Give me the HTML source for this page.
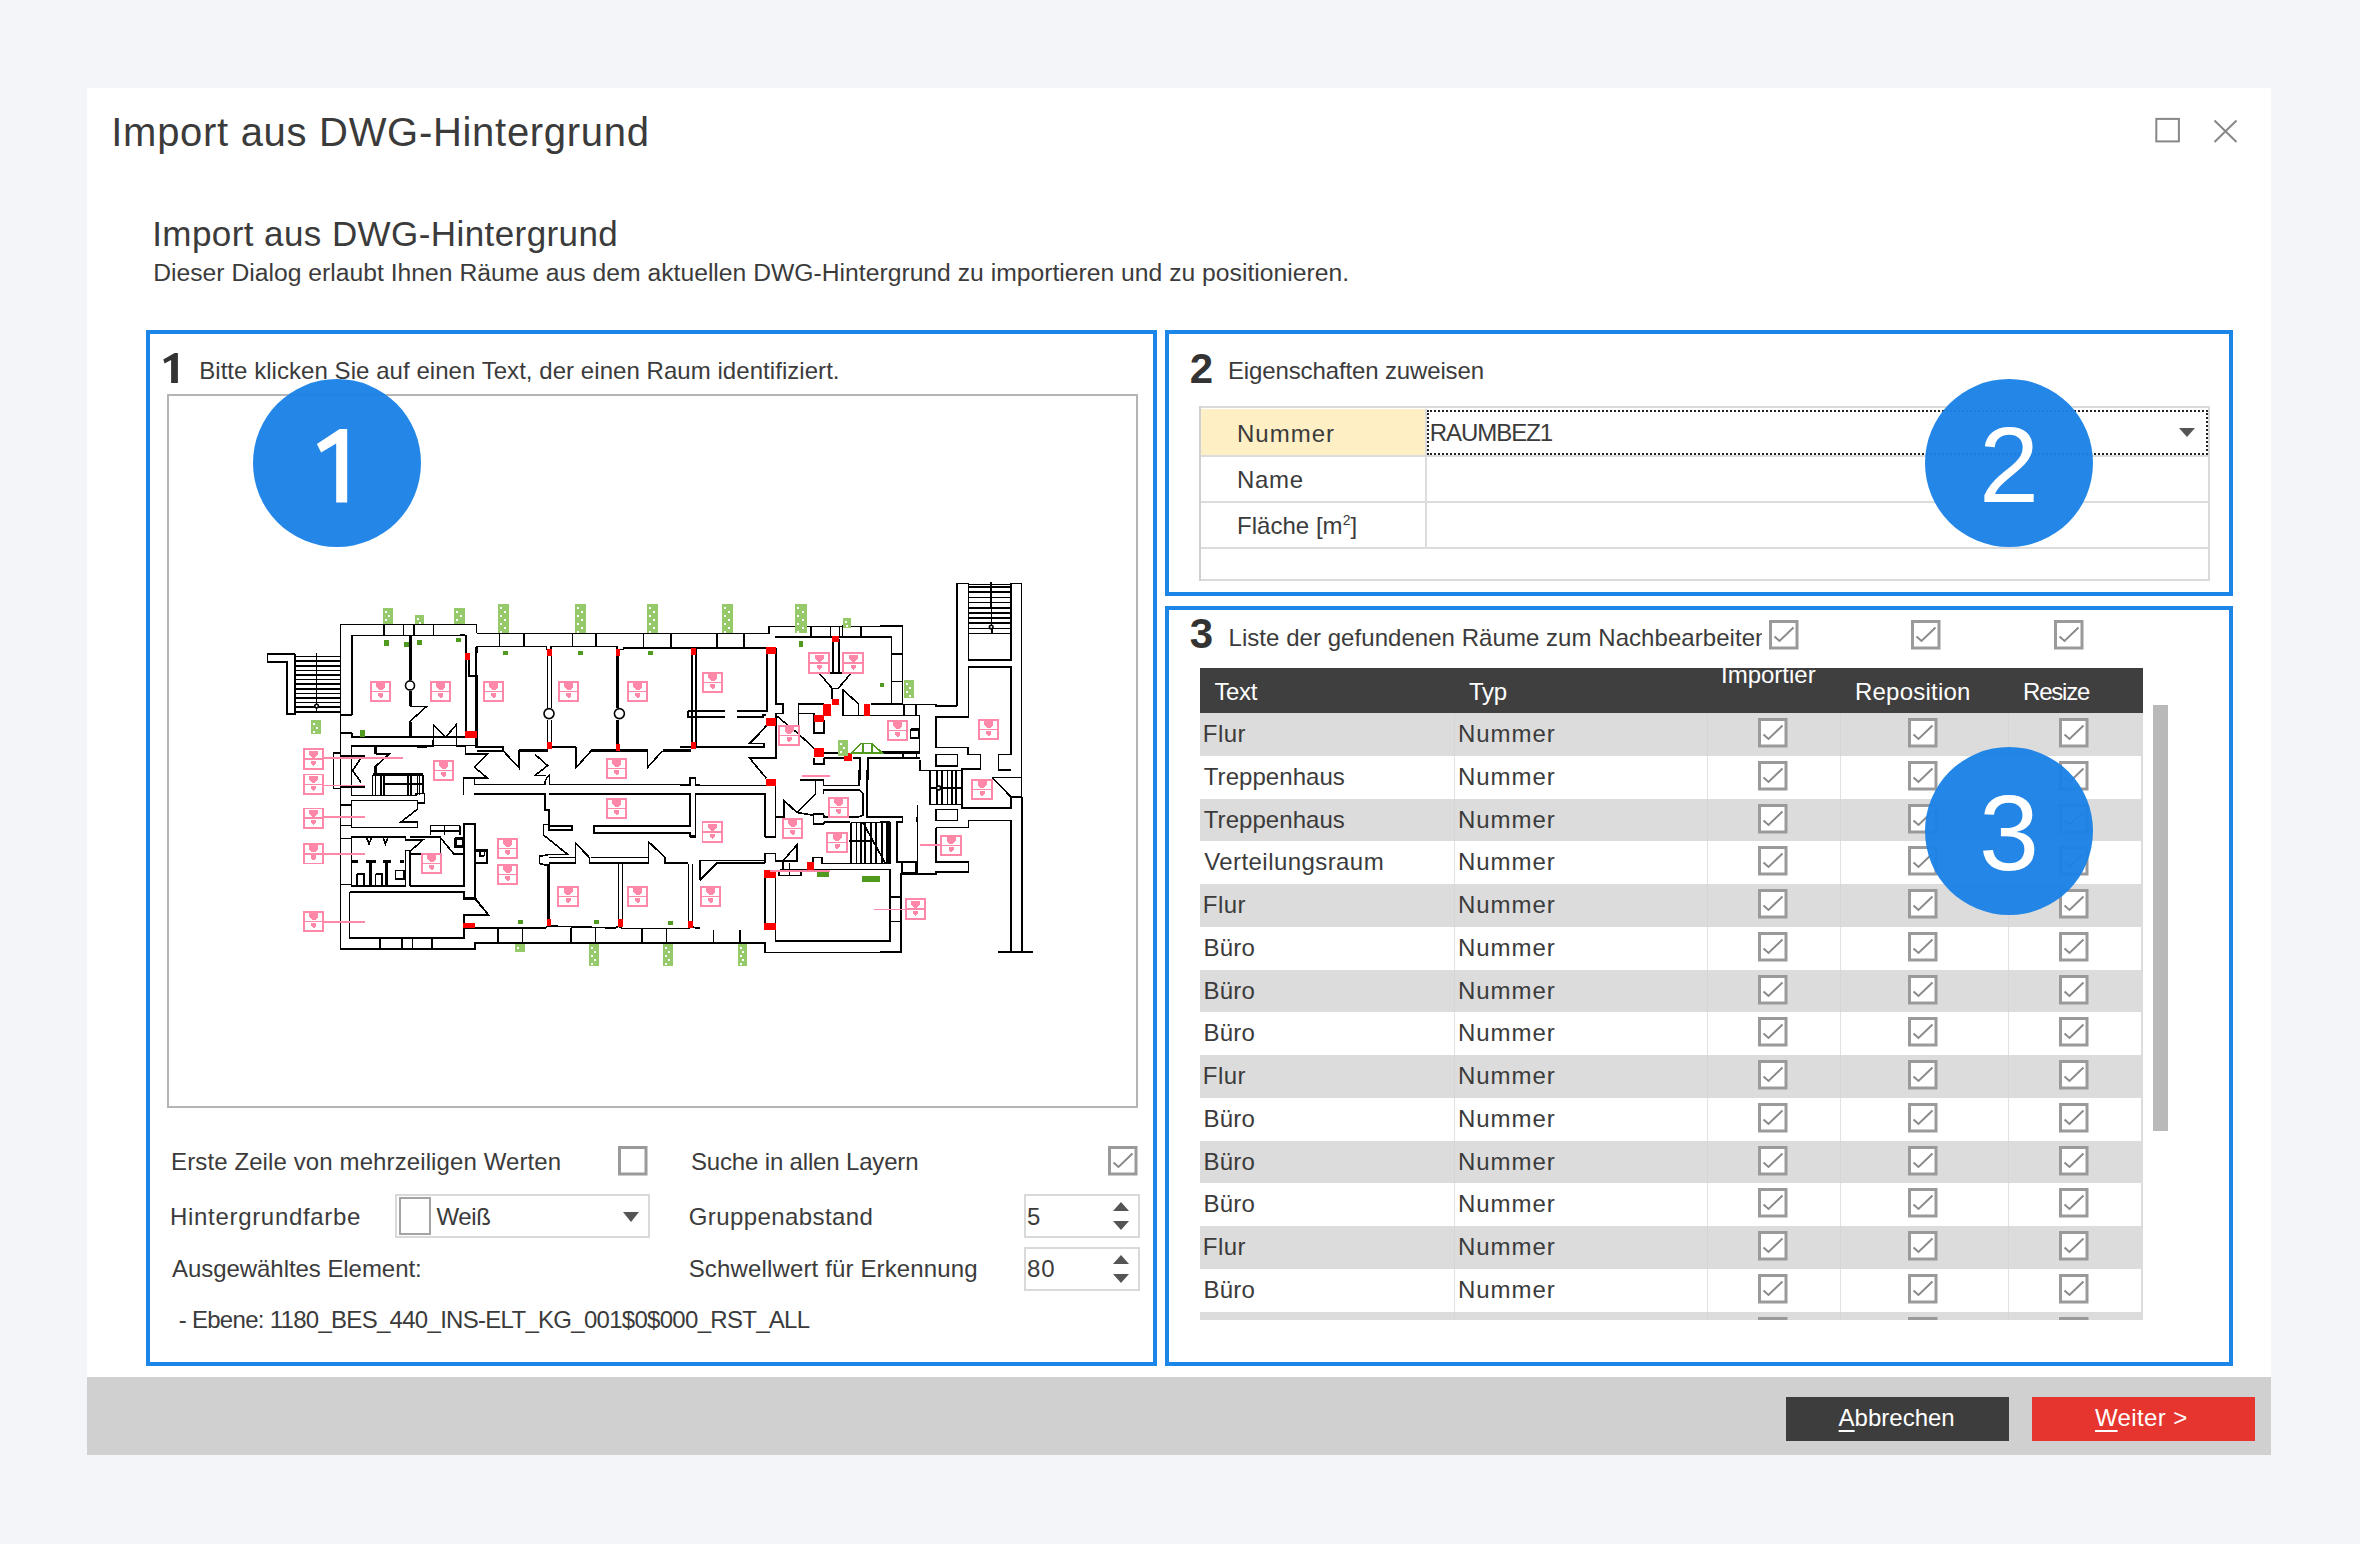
<!DOCTYPE html>
<html><head><meta charset="utf-8"><style>
html,body{margin:0;padding:0;width:2360px;height:1544px;overflow:hidden;background:#f4f5f8;font-family:'Liberation Sans', sans-serif}
.r{position:absolute;box-sizing:content-box}
.t{position:absolute;white-space:nowrap}
u{text-decoration-thickness:2px;text-underline-offset:4px}
</style></head><body>
<div class="r" style="left:87px;top:88px;width:2184px;height:1367px;background:#fff"></div>
<div class="r" style="left:87px;top:1377px;width:2184px;height:78px;background:#d0d0d0"></div>
<div class="t" style="left:111.30px;top:112.00px;font-size:40px;line-height:40px;color:#3b3b3b;font-weight:normal;letter-spacing:0.7px;">Import aus DWG-Hintergrund</div>
<svg class="r" style="left:2150px;top:112px" width="100" height="40" viewBox="0 0 100 40"><rect x="6.3" y="6.9" width="22.6" height="22.5" fill="none" stroke="#878787" stroke-width="2"/><path d="M64.5 8.5 L86.5 30 M86.5 8.5 L64.5 30" stroke="#878787" stroke-width="2" fill="none"/></svg>
<div class="t" style="left:152.20px;top:216.05px;font-size:35px;line-height:35px;color:#3b3b3b;font-weight:normal;letter-spacing:0.42px;">Import aus DWG-Hintergrund</div>
<div class="t" style="left:153.20px;top:260.50px;font-size:24.7px;line-height:24.7px;color:#3b3b3b;font-weight:normal;letter-spacing:0.006px;">Dieser Dialog erlaubt Ihnen R&auml;ume aus dem aktuellen DWG-Hintergrund zu importieren und zu positionieren.</div>
<div class="r" style="left:146px;top:330px;width:1003px;height:1028px;border:4px solid #1b86e8"></div>
<div class="r" style="left:1165px;top:330px;width:1060px;height:258px;border:4px solid #1b86e8"></div>
<div class="r" style="left:1165px;top:606px;width:1060px;height:752px;border:4px solid #1b86e8"></div>
<svg class="r" style="left:0;top:0" width="400" height="400" viewBox="0 0 400 400"><path d="M174.6,353 L177.9,353 L177.9,383 L171.1,383 L171.1,360 L164.6,363.6 L163.3,359.6 Z" fill="#333"/></svg>
<div class="t" style="left:199.20px;top:359.30px;font-size:24px;line-height:24px;color:#3b3b3b;font-weight:normal;letter-spacing:0.05px;">Bitte klicken Sie auf einen Text, der einen Raum identifiziert.</div>
<div class="r" style="left:167px;top:394px;width:967px;height:710px;border:2px solid #b4b4b4;background:#fff"></div>
<svg class="r" style="left:0;top:0" width="2360" height="1544" viewBox="0 0 2360 1544" shape-rendering="crispEdges">
<g fill="none" stroke="#000" stroke-width="1.6">
<path d="M476.6,633.3 L476.6,624.5 L340.6,624.5 L340.6,948.7 L475.2,948.7 L475.2,943.2 L765.0,943.2 L765.0,952.5 L900.4,952.5 L900.4,874.2"/>
<path d="M351.7,714.9 L351.7,635.3 L465.7,635.3 L465.7,736.7 L351.7,736.7 L351.7,732.7"/>
<path d="M383.7,624.5 L383.7,635.3"/>
<path d="M403.3,624.5 L403.3,635.3"/>
<path d="M413.8,624.5 L413.8,635.3"/>
<path d="M433.5,624.5 L433.5,635.3"/>
<path d="M340.6,714.9 L351.7,714.9"/>
<path d="M340.6,732.7 L351.7,732.7"/>
<circle cx="410.0" cy="685.4" r="4.5" fill="#fff" shape-rendering="auto"/>
<path d="M410.0,706.3 L426.7,706.3 L409.0,722.3"/>
<path d="M295.0,654.2 L267.4,654.2 L267.4,662.0 L287.0,662.0 L287.0,713.7 L295.0,713.7 L295.0,654.2"/>
<path d="M295.0,656.5 L340.6,656.5"/>
<path d="M295.0,661.1 L340.6,661.1"/>
<path d="M295.0,665.7 L340.6,665.7"/>
<path d="M295.0,670.3 L340.6,670.3"/>
<path d="M295.0,674.9 L340.6,674.9"/>
<path d="M295.0,679.5 L340.6,679.5"/>
<path d="M295.0,684.1 L340.6,684.1"/>
<path d="M295.0,688.7 L340.6,688.7"/>
<path d="M295.0,693.3 L340.6,693.3"/>
<path d="M295.0,697.9 L340.6,697.9"/>
<path d="M295.0,702.5 L340.6,702.5"/>
<path d="M295.0,707.1 L340.6,707.1"/>
<path d="M295.0,711.7 L340.6,711.7"/>
<path d="M316.6,653.0 L316.6,712.0"/>
<circle cx="316.6" cy="706.0" r="1.8" fill="#fff" shape-rendering="auto"/>
<path d="M351.7,745.6 L476.0,745.6"/>
<path d="M465.4,646.5 L465.4,736.7"/>
<path d="M476.2,646.5 L476.2,747.8"/>
<path d="M351.3,795.6 L351.3,745.7 L417.5,745.7 L417.5,747.1 L423.9,747.1 L433.2,745.7 L433.2,740.0"/>
<path d="M351.3,795.6 L416.1,795.6 L416.1,793.4 L424.6,793.4 L424.6,802.7 L417.5,802.7"/>
<path d="M351.3,800.5 L417.5,800.5 L417.5,809.1 L401.1,821.9 L417.5,821.9 L417.5,827.6 L351.3,827.6 L351.3,800.5"/>
<path d="M341.3,804.8 L351.3,804.8"/>
<path d="M341.3,825.5 L351.3,825.5"/>
<path d="M351.3,836.9 L405.4,836.9 L405.4,839.7 L423.2,839.7 L411.1,850.4"/>
<path d="M351.3,836.9 L351.3,886.0 L405.4,886.0 L405.4,850.4 L409.7,850.4 L409.7,886.0"/>
<path d="M410.4,836.9 L440.3,836.9 L440.3,854.0 L410.4,854.0"/>
<path d="M410.4,854.0 L410.4,886.0 L463.8,886.0 L463.8,836.9"/>
<path d="M341.3,838.3 L351.3,838.3"/>
<path d="M341.3,884.6 L351.3,884.6"/>
<path d="M357.0,873.9 L364.1,873.9 L364.1,885.3"/>
<path d="M357.0,873.9 L357.0,885.3"/>
<path d="M375.5,873.9 L381.9,873.9 L381.9,885.3"/>
<path d="M375.5,873.9 L375.5,885.3"/>
<path d="M395.4,870.3 L404.0,870.3 L404.0,878.9 L395.4,878.9 L395.4,870.3"/>
<path d="M366.9,838.3 L369.1,844.0 L371.2,838.3"/>
<path d="M383.3,838.3 L385.4,844.0 L387.6,838.3"/>
<path d="M349.5,891.7 L463.8,891.7 L463.8,898.1 L475.2,898.1 L475.2,824.0 L463.8,824.0 L463.8,836.9"/>
<path d="M349.5,891.7 L349.5,938.0 L463.8,938.0 L463.8,914.5 L475.2,914.5"/>
<path d="M475.2,898.1 L488.0,914.5 L475.2,914.5"/>
<path d="M379.7,938.0 L379.7,948.7"/>
<path d="M401.8,938.0 L401.8,948.7"/>
<path d="M412.5,938.0 L412.5,948.7"/>
<path d="M431.7,938.0 L431.7,948.7"/>
<path d="M333.4,752.8 L339.9,752.8"/>
<path d="M333.4,752.8 L333.4,788.4 L339.9,788.4"/>
<path d="M352.0,757.8 L361.2,757.8 L352.7,770.6 L361.2,782.7"/>
<path d="M375.5,754.2 L389.0,754.2 L375.5,766.4"/>
<path d="M372.6,774.9 L372.6,794.8"/>
<path d="M423.2,774.9 L423.2,793.4"/>
<path d="M375.5,776.3 L375.5,794.8"/>
<path d="M381.2,776.3 L381.2,794.8"/>
<path d="M384.0,776.3 L384.0,794.8"/>
<path d="M408.2,776.3 L408.2,794.8"/>
<path d="M411.1,776.3 L411.1,794.8"/>
<path d="M417.5,776.3 L417.5,794.8"/>
<path d="M419.6,776.3 L419.6,794.8"/>
<path d="M382.6,784.2 L421.8,784.2"/>
<path d="M430.3,825.5 L460.2,825.5"/>
<path d="M430.3,831.2 L460.2,831.2"/>
<path d="M430.3,825.5 L430.3,835.4"/>
<path d="M444.6,825.5 L444.6,835.4"/>
<path d="M460.2,825.5 L460.2,835.4"/>
<path d="M441.0,838.3 L453.8,854.0 L463.1,854.0"/>
<path d="M475.2,851.1 L487.3,851.1 L487.3,862.5 L475.2,862.5"/>
<path d="M479.5,851.1 L479.5,856.1 L484.4,856.1"/>
<path d="M433.5,737.0 L433.5,725.4 L445.8,737.0 L456.3,724.7 L456.3,746.3 L465.5,746.3 L465.5,754.3 L476.6,754.3"/>
<path d="M351.7,746.3 L417.5,746.3 L420.0,747.5 L424.9,746.3 L433.5,746.3 L433.5,737.0"/>
<path d="M476.6,633.3 L768.7,633.3 L768.7,626.4 L902.3,626.4 L902.3,704.6"/>
<path d="M476.8,653.1 L476.8,646.5 L546.3,646.5 L546.3,649.5"/>
<path d="M551.1,649.5 L551.1,646.5 L617.0,646.5 L617.0,649.5 L623.0,649.5 L624.2,647.7 L680.0,647.7"/>
<path d="M499.5,633.3 L499.5,646.5"/>
<path d="M524.1,633.3 L524.1,646.5"/>
<path d="M572.6,633.3 L572.6,646.5"/>
<path d="M596.0,633.3 L596.0,646.5"/>
<path d="M643.3,633.3 L643.3,646.5"/>
<path d="M670.9,633.3 L670.9,646.5"/>
<path d="M716.8,633.3 L716.8,646.5"/>
<path d="M743.8,633.3 L743.8,646.5"/>
<path d="M465.4,635.1 L465.4,736.4"/>
<path d="M465.4,635.1 L460.0,635.1"/>
<path d="M469.0,659.1 L469.0,675.9 L476.8,675.9 L476.8,747.2 L503.1,747.2 L503.1,750.8 L476.8,750.8"/>
<path d="M503.1,750.8 L518.7,767.5 L518.7,750.2"/>
<path d="M576.2,747.2 L576.2,767.5 L591.2,750.8"/>
<path d="M551.1,747.2 L576.2,747.2"/>
<path d="M647.5,750.2 L647.5,767.5 L662.5,750.8"/>
<path d="M547.5,649.5 L547.5,708.2"/>
<path d="M551.3,649.5 L551.3,708.2"/>
<path d="M547.5,719.6 L547.5,747.2"/>
<path d="M551.3,719.6 L551.3,747.2"/>
<circle cx="549.0" cy="713.6" r="5.0" fill="#fff" shape-rendering="auto"/>
<circle cx="619.4" cy="713.6" r="5.0" fill="#fff" shape-rendering="auto"/>
<path d="M692.4,649.5 L692.4,747.2"/>
<path d="M695.8,649.5 L695.8,747.2"/>
<path d="M687.7,711.2 L687.7,717.2 L700.0,717.2"/>
<path d="M687.7,711.2 L700.0,711.2"/>
<path d="M463.3,795.2 L463.3,778.0 L474.6,778.0 L474.6,784.6 L545.0,784.6 L545.0,781.3 L547.6,776.6 L549.6,775.3 L549.6,784.6 L690.3,784.6 L690.3,777.3 L695.6,777.3 L695.6,784.6 L700.0,784.6"/>
<path d="M474.6,795.2 L474.6,793.9 L545.0,793.9 L545.0,809.8 L548.9,809.8 L548.9,824.4 L543.6,824.4 L543.6,835.0 L567.5,854.3 L550.3,854.3 L539.6,856.3 L539.6,863.6 L547.6,865.6 L547.6,920.0"/>
<path d="M548.9,793.9 L690.3,793.9 L690.3,825.8 L594.1,825.8 L594.1,833.1 L690.3,833.1 L690.3,837.0 L695.6,837.0 L695.6,793.9 L700.0,793.9"/>
<path d="M548.9,824.4 L548.9,829.7 L572.2,829.7 L572.2,825.8 L548.9,825.8"/>
<path d="M548.9,862.9 L575.5,862.9 L575.5,843.0 L589.4,857.6 L589.4,862.9 L648.5,862.9 L648.5,841.7 L665.1,857.6 L665.1,862.9 L688.3,862.9"/>
<path d="M548.9,857.6 L574.8,857.6"/>
<path d="M590.8,857.6 L648.5,857.6"/>
<path d="M618.6,863.6 L618.6,926.6"/>
<path d="M622.6,863.6 L622.6,926.6"/>
<path d="M688.3,863.6 L688.3,926.6"/>
<path d="M692.3,863.6 L692.3,926.6"/>
<path d="M463.3,928.0 L545.0,928.0 L547.6,926.0 L615.3,928.0 L618.6,926.0 L622.6,928.6 L688.3,928.6 L692.3,926.6 L695.6,928.0 L700.0,928.0"/>
<path d="M497.8,928.0 L497.8,943.2"/>
<path d="M522.4,928.0 L522.4,943.2"/>
<path d="M570.8,928.0 L570.8,943.2"/>
<path d="M595.4,928.0 L595.4,943.2"/>
<path d="M641.9,928.0 L641.9,943.2"/>
<path d="M666.4,928.0 L666.4,943.2"/>
<path d="M474.6,943.2 L700.0,943.2"/>
<path d="M474.6,943.2 L474.6,949.2 L460.0,949.2"/>
<path d="M474.6,898.8 L474.6,824.4 L463.3,824.4 L463.3,886.8"/>
<path d="M463.3,892.8 L463.3,898.8 L474.6,898.8 L488.5,914.7 L463.3,914.7 L463.3,928.0"/>
<path d="M474.6,849.6 L487.2,849.6 L487.2,863.6 L474.6,863.6"/>
<path d="M479.9,851.0 L484.6,851.0 L484.6,855.6 L479.9,855.6 L479.9,851.0"/>
<path d="M680.0,647.7 L766.9,647.7 L766.9,711.2 L736.9,711.2"/>
<path d="M724.9,711.2 L696.2,711.2"/>
<path d="M696.2,717.2 L724.9,717.2"/>
<path d="M736.9,717.2 L762.7,717.2 L762.7,714.8 L766.3,714.8"/>
<path d="M680.0,747.2 L763.9,747.2 L763.9,743.6 L749.5,743.6 L757.9,735.2 L766.3,725.6"/>
<path d="M775.9,647.7 L775.9,704.0 L783.0,704.0 L783.0,713.6 L775.9,713.6 L775.9,758.0 L749.5,758.0 L766.3,778.3"/>
<path d="M692.0,647.7 L692.0,747.2"/>
<path d="M696.2,647.7 L696.2,747.2"/>
<path d="M775.3,714.8 L798.6,734.0 L814.2,748.4"/>
<path d="M775.3,636.9 L891.5,636.9 L891.5,704.0 L870.5,704.0"/>
<path d="M858.5,704.0 L858.5,715.4 L843.0,715.4 L843.0,688.5"/>
<path d="M832.2,699.2 L832.2,688.5 L838.8,688.5"/>
<path d="M819.0,672.9 L832.2,688.5"/>
<path d="M851.3,672.9 L838.2,688.5"/>
<path d="M843.0,689.7 L858.5,704.0"/>
<path d="M832.8,639.3 L832.8,672.9"/>
<path d="M838.8,639.3 L838.8,672.9"/>
<path d="M830.4,672.9 L842.4,672.9"/>
<path d="M798.6,734.0 L798.6,704.0 L823.8,704.0"/>
<path d="M798.6,713.6 L814.2,713.6 L814.2,732.8 L823.8,732.8 L823.8,719.6"/>
<path d="M842.4,625.0 L842.4,635.7"/>
<path d="M811.2,626.4 L811.2,636.9"/>
<path d="M830.4,626.4 L830.4,636.9"/>
<path d="M839.4,626.4 L839.4,636.9"/>
<path d="M860.9,626.4 L860.9,636.9"/>
<path d="M902.3,626.4 L902.3,704.0 L892.1,704.0"/>
<path d="M892.1,653.7 L902.3,653.7"/>
<path d="M892.1,681.3 L902.3,681.3"/>
<path d="M823.8,753.2 L840.6,753.2"/>
<path d="M823.8,758.0 L844.2,758.0"/>
<path d="M852.5,753.2 L920.0,753.2"/>
<path d="M852.5,758.0 L859.7,758.0 L859.7,780.0"/>
<path d="M868.1,780.0 L868.1,758.0 L920.0,758.0"/>
<path d="M814.2,758.0 L814.2,763.9 L823.8,763.9 L823.8,758.0"/>
<path d="M903.5,705.2 L903.5,714.8"/>
<path d="M916.0,705.2 L916.0,714.8"/>
<path d="M858.5,715.4 L920.0,715.4"/>
<path d="M902.9,753.2 L902.9,758.0"/>
<path d="M916.6,753.2 L916.6,758.0"/>
<path d="M910.6,729.8 L918.4,729.8 L918.4,738.2 L910.6,738.2 L910.6,729.8"/>
<path d="M957.2,706.0 L957.2,583.3 L968.4,583.3 L968.4,584.3 L1010.6,584.3 L1010.6,583.3 L1021.4,583.3 L1021.4,797.8"/>
<path d="M968.4,584.3 L968.4,660.0 L1010.8,660.0 L1010.8,584.3"/>
<path d="M968.4,587.0 L1010.8,587.0"/>
<path d="M968.4,592.2 L1010.8,592.2"/>
<path d="M968.4,597.3 L1010.8,597.3"/>
<path d="M968.4,602.5 L1010.8,602.5"/>
<path d="M968.4,607.7 L1010.8,607.7"/>
<path d="M968.4,612.8 L1010.8,612.8"/>
<path d="M968.4,618.0 L1010.8,618.0"/>
<path d="M968.4,623.2 L1010.8,623.2"/>
<path d="M968.4,628.3 L1010.8,628.3"/>
<path d="M968.4,633.5 L1010.8,633.5"/>
<path d="M990.8,581.6 L991.8,633.9"/>
<circle cx="991.2" cy="627.1" r="1.8" fill="#fff" shape-rendering="auto"/>
<path d="M968.4,667.2 L1010.8,667.2 L1010.8,755.0"/>
<path d="M968.4,667.2 L968.4,716.9 L935.8,716.9 L935.8,747.5 L968.1,747.5 L968.1,754.3 L980.6,754.3 L980.6,769.2 L961.6,769.2"/>
<path d="M957.2,706.0 L935.8,706.0 L935.8,704.6 L902.4,704.6 L902.4,625.8 L880.0,625.8"/>
<path d="M891.6,636.6 L891.6,704.6 L880.0,704.6"/>
<path d="M891.6,654.3 L902.4,654.3"/>
<path d="M891.6,681.5 L902.4,681.5"/>
<path d="M880.0,715.5 L919.4,715.5 L919.4,752.2 L880.0,752.2"/>
<path d="M903.8,704.6 L903.8,715.5"/>
<path d="M916.0,705.3 L916.0,715.5"/>
<path d="M910.6,729.1 L919.4,729.1 L919.4,738.6 L910.6,738.6 L910.6,729.1"/>
<path d="M935.8,754.3 L957.5,754.3 L957.5,765.8 L935.8,765.8 L935.8,754.3"/>
<path d="M998.3,754.3 L1010.8,754.3"/>
<path d="M998.3,754.3 L998.3,769.9"/>
<path d="M998.3,770.2 L1010.8,770.2"/>
<path d="M919.7,760.0 L919.7,770.4 L930.1,770.4 L930.1,804.6 L962.2,804.6 L962.2,808.1 L1010.9,808.1 L1010.9,796.9 L1021.8,796.9"/>
<path d="M962.2,768.4 L980.3,768.4 L980.3,760.0"/>
<path d="M930.1,770.4 L962.2,770.4 L962.2,768.4"/>
<path d="M937.1,771.1 L937.1,803.9"/>
<path d="M942.0,771.1 L942.0,803.9"/>
<path d="M947.5,771.1 L947.5,803.9"/>
<path d="M951.7,771.1 L951.7,803.9"/>
<path d="M955.9,771.1 L955.9,803.9"/>
<path d="M962.2,771.1 L962.2,803.9"/>
<path d="M930.8,787.9 L962.2,787.9"/>
<circle cx="938.5" cy="787.9" r="2.0" fill="#fff" shape-rendering="auto"/>
<path d="M992.1,777.4 L1010.9,796.9"/>
<path d="M992.1,777.4 L1021.8,777.4"/>
<path d="M935.7,809.4 L957.3,809.4 L957.3,820.6 L935.7,820.6 L935.7,809.4"/>
<path d="M935.7,827.5 L968.4,827.5 L968.4,820.6 L1010.9,820.6 L1010.9,952.2"/>
<path d="M935.7,827.5 L935.7,861.7 L968.4,861.7 L968.4,872.1 L935.7,872.1 L935.7,874.2 L900.9,874.2 L900.9,952.2 L880.0,952.2"/>
<path d="M917.6,804.6 L917.6,861.7 L896.7,861.7 L896.7,822.0 L902.3,822.0 L902.3,816.4 L880.0,816.4"/>
<path d="M902.3,862.4 L902.3,873.5"/>
<path d="M916.2,862.4 L916.2,873.5"/>
<path d="M889.7,871.4 L889.7,941.1 L880.0,941.1"/>
<path d="M889.7,897.2 L900.2,897.2"/>
<path d="M889.7,921.6 L900.2,921.6"/>
<path d="M997.7,952.2 L1032.5,952.2"/>
<path d="M1021.8,796.9 L1021.8,952.2"/>
<path d="M880.0,822.0 L889.1,822.0 L889.1,863.1"/>
<path d="M850.6,822.4 L889.7,822.4 L889.7,863.6 L822.0,863.6 L822.0,857.6 L812.7,857.6 L812.7,863.6"/>
<path d="M851.2,823.1 L851.2,862.9"/>
<path d="M856.6,823.1 L856.6,862.9"/>
<path d="M861.2,823.1 L861.2,862.9"/>
<path d="M865.2,823.1 L865.2,862.9"/>
<path d="M871.2,823.1 L871.2,862.9"/>
<path d="M875.8,823.1 L875.8,862.9"/>
<path d="M881.8,823.1 L881.8,862.9"/>
<path d="M887.1,823.1 L887.1,862.9"/>
<path d="M863.2,823.1 L885.1,862.9"/>
<path d="M848.6,841.0 L871.2,841.0"/>
<path d="M867.2,770.0 L867.2,817.1 L902.4,817.1 L902.4,821.8 L897.0,821.8 L897.0,861.6 L917.6,861.6 L917.6,823.1 L916.3,817.1"/>
<path d="M901.7,861.6 L901.7,872.9 L917.6,872.9"/>
<path d="M917.0,861.6 L917.0,872.9"/>
<path d="M859.2,770.0 L859.2,785.3 L823.4,785.3 L823.4,780.0 L800.1,780.0"/>
<path d="M815.4,780.0 L815.4,793.9 L796.2,813.1"/>
<path d="M823.4,793.9 L823.4,789.9 L859.2,789.9 L863.2,793.9 L863.2,815.1 L857.9,817.1 L824.0,817.1 L823.4,813.8 L813.4,813.8 L813.4,823.8 L823.4,823.8 L824.7,821.8 L849.9,821.8"/>
<path d="M775.6,817.1 L784.2,817.1 L784.2,800.5 L796.8,812.5 L812.7,815.1"/>
<path d="M765.0,862.9 L765.0,853.6 L775.6,853.6 L775.6,860.9 L796.8,860.9 L796.8,845.0 L782.9,860.9"/>
<path d="M779.6,869.6 L889.7,869.6 L889.7,941.2 L775.6,941.2 L775.6,876.2"/>
<path d="M778.9,870.9 L778.9,875.5 L800.8,875.5 L800.8,870.9"/>
<path d="M789.5,862.9 L789.5,876.2"/>
<path d="M782.9,862.3 L782.9,870.9"/>
<path d="M765.0,869.6 L765.0,929.3"/>
<path d="M889.7,896.8 L900.4,896.8"/>
<path d="M889.7,921.3 L900.4,921.3"/>
<path d="M900.4,873.5 L900.4,952.5"/>
<path d="M765.0,837.0 L765.0,793.9 L695.3,793.9 L695.3,835.7 L690.0,835.7 L690.0,832.4 L680.0,832.4"/>
<path d="M775.6,837.0 L775.6,784.6"/>
<path d="M765.0,837.0 L775.6,837.0"/>
<path d="M680.0,793.9 L690.0,793.9 L690.0,825.8 L680.0,825.8"/>
<path d="M680.0,785.3 L690.0,785.3 L690.0,778.0 L695.3,778.0 L695.3,785.3 L765.6,785.3"/>
<path d="M699.9,880.2 L699.9,860.3 L717.2,860.3 L765.0,860.3"/>
<path d="M699.9,880.2 L717.2,862.9 L765.0,862.9"/>
<path d="M713.6,929.5 L713.6,943.0"/>
<path d="M740.0,929.5 L740.0,943.0"/>
<path d="M465.0,754.2 L487.0,754.2 L474.2,767.0 L487.0,777.7 L465.0,777.7"/>
<path d="M534.8,754.2 L547.6,765.6 L534.8,775.6 L546.0,775.6"/>
<path d="M463.6,777.7 L463.6,794.0"/>
<path d="M463.6,777.7 L474.0,777.7"/>
</g><g fill="none" stroke="#000" stroke-width="3">
<path d="M410.0,636.0 L410.0,680.0"/>
<path d="M410.0,691.0 L410.0,706.3"/>
<path d="M410.0,722.3 L410.0,737.0"/>
<path d="M351.3,861.1 L357.7,861.1"/>
<path d="M365.5,861.1 L375.5,861.1"/>
<path d="M383.3,861.1 L391.1,861.1"/>
<path d="M399.7,861.1 L404.0,861.1"/>
<path d="M370.5,861.1 L370.5,885.3"/>
<path d="M386.9,861.1 L386.9,885.3"/>
<path d="M341.3,756.4 L364.8,756.4"/>
<path d="M341.3,786.3 L364.8,786.3"/>
<path d="M375.5,745.7 L375.5,754.2"/>
<path d="M375.5,766.4 L375.5,774.2"/>
<path d="M372.6,774.9 L423.2,774.9"/>
<path d="M455.2,838.3 L463.8,838.3 L463.8,846.1 L455.2,846.1 L455.2,838.3"/>
<path d="M518.7,750.2 L548.1,750.2"/>
<path d="M591.2,750.2 L647.5,750.2"/>
<path d="M662.5,750.2 L691.2,750.2"/>
<path d="M617.9,654.9 L617.9,708.2"/>
<path d="M617.9,719.6 L617.9,749.6"/>
<path d="M548.0,863.6 L548.0,920.0"/>
</g><g fill="#ff0000">
<rect x="464.8" y="652.5" width="5" height="7"/>
<rect x="546.9" y="648.9" width="5" height="7"/>
<rect x="546.9" y="741.8" width="5" height="7"/>
<rect x="616.4" y="648.9" width="4" height="7"/>
<rect x="616.4" y="743.6" width="4" height="7"/>
<rect x="691.2" y="647.7" width="5" height="7"/>
<rect x="691.2" y="741.8" width="5" height="7"/>
<rect x="464.8" y="731.0" width="12" height="7"/>
<rect x="463.3" y="923.3" width="12" height="5"/>
<rect x="547.0" y="919.3" width="4" height="7"/>
<rect x="618.0" y="919.3" width="5" height="8"/>
<rect x="687.7" y="921.3" width="5" height="7"/>
<rect x="766.0" y="647.1" width="10" height="7"/>
<rect x="766.0" y="718.4" width="10" height="8"/>
<rect x="831.9" y="636.3" width="7" height="6"/>
<rect x="831.9" y="698.6" width="7" height="6"/>
<rect x="823.2" y="704.0" width="8" height="12"/>
<rect x="814.2" y="715.4" width="10" height="7"/>
<rect x="863.9" y="704.0" width="6" height="12"/>
<rect x="814.2" y="748.4" width="10" height="9"/>
<rect x="844.2" y="752.6" width="8" height="8"/>
<rect x="766.0" y="778.6" width="10" height="7.3"/>
<rect x="807.2" y="861.6" width="6.4" height="8.6"/>
<rect x="764.3" y="870.2" width="12" height="8"/>
<rect x="764.3" y="923.3" width="12" height="6.6"/>
<rect x="687.7" y="921.3" width="5" height="5.3"/>
</g><g stroke="#ff88a8" stroke-width="1.6" fill="none">
<path d="M324,758 L402.5,758"/>
<path d="M324,785.3 L365,785.3"/>
<path d="M324,817 L365,817"/>
<path d="M324,854 L365,854"/>
<path d="M324,922 L365,922"/>
<path d="M802,775.8 L830,775.8"/>
<path d="M874,909.5 L905,909.5"/>
<path d="M920,845 L940,845"/>
<path d="M770,871 L830,871"/>
<rect x="370.8" y="681.8" width="19.4" height="19.4"/><path d="M370.8,691.5 L390.2,691.5"/>
<rect x="430.8" y="681.8" width="19.4" height="19.4"/><path d="M430.8,691.5 L450.2,691.5"/>
<rect x="483.8" y="681.8" width="19.4" height="19.4"/><path d="M483.8,691.5 L503.2,691.5"/>
<rect x="558.8" y="681.8" width="19.4" height="19.4"/><path d="M558.8,691.5 L578.2,691.5"/>
<rect x="627.8" y="681.8" width="19.4" height="19.4"/><path d="M627.8,691.5 L647.2,691.5"/>
<rect x="702.8" y="672.8" width="19.4" height="19.4"/><path d="M702.8,682.5 L722.2,682.5"/>
<rect x="809.3" y="653.3" width="19.4" height="19.4"/><path d="M809.3,663.0 L828.7,663.0"/>
<rect x="843.3" y="653.3" width="19.4" height="19.4"/><path d="M843.3,663.0 L862.7,663.0"/>
<rect x="887.8" y="720.8" width="19.4" height="19.4"/><path d="M887.8,730.5 L907.2,730.5"/>
<rect x="779.3" y="725.8" width="19.4" height="19.4"/><path d="M779.3,735.5 L798.7,735.5"/>
<rect x="606.8" y="758.8" width="19.4" height="19.4"/><path d="M606.8,768.5 L626.2,768.5"/>
<rect x="433.8" y="760.8" width="19.4" height="19.4"/><path d="M433.8,770.5 L453.2,770.5"/>
<rect x="606.8" y="798.8" width="19.4" height="19.4"/><path d="M606.8,808.5 L626.2,808.5"/>
<rect x="978.8" y="719.8" width="19.4" height="19.4"/><path d="M978.8,729.5 L998.2,729.5"/>
<rect x="702.6" y="822.3" width="19.4" height="19.4"/><path d="M702.6,832.0 L722.0,832.0"/>
<rect x="782.8" y="818.8" width="19.4" height="19.4"/><path d="M782.8,828.5 L802.2,828.5"/>
<rect x="828.8" y="797.8" width="19.4" height="19.4"/><path d="M828.8,807.5 L848.2,807.5"/>
<rect x="827.3" y="832.8" width="19.4" height="19.4"/><path d="M827.3,842.5 L846.7,842.5"/>
<rect x="941.3" y="835.8" width="19.4" height="19.4"/><path d="M941.3,845.5 L960.7,845.5"/>
<rect x="972.3" y="779.8" width="19.4" height="19.4"/><path d="M972.3,789.5 L991.7,789.5"/>
<rect x="497.8" y="838.8" width="19.4" height="19.4"/><path d="M497.8,848.5 L517.2,848.5"/>
<rect x="497.8" y="864.8" width="19.4" height="19.4"/><path d="M497.8,874.5 L517.2,874.5"/>
<rect x="421.8" y="853.8" width="19.4" height="19.4"/><path d="M421.8,863.5 L441.2,863.5"/>
<rect x="558.3" y="886.8" width="19.4" height="19.4"/><path d="M558.3,896.5 L577.7,896.5"/>
<rect x="627.8" y="886.8" width="19.4" height="19.4"/><path d="M627.8,896.5 L647.2,896.5"/>
<rect x="700.8" y="886.8" width="19.4" height="19.4"/><path d="M700.8,896.5 L720.2,896.5"/>
<rect x="905.8" y="899.3" width="19.4" height="19.4"/><path d="M905.8,909.0 L925.2,909.0"/>
<rect x="303.8" y="749.3" width="19.4" height="19.4"/><path d="M303.8,759.0 L323.2,759.0"/>
<rect x="303.8" y="774.6" width="19.4" height="19.4"/><path d="M303.8,784.3 L323.2,784.3"/>
<rect x="303.8" y="808.5" width="19.4" height="19.4"/><path d="M303.8,818.2 L323.2,818.2"/>
<rect x="303.8" y="844.1" width="19.4" height="19.4"/><path d="M303.8,853.8 L323.2,853.8"/>
<rect x="303.8" y="911.8" width="19.4" height="19.4"/><path d="M303.8,921.5 L323.2,921.5"/>
</g><g fill="#ff88a8">
<path d="M376.0,683.0 h9 v4 l-3,3 h-3 l-3,-3 z M378.0,693.0 h5 v3 l-2,2 h-1 l-2,-2 z"/>
<path d="M436.0,683.0 h9 v4 l-3,3 h-3 l-3,-3 z M438.0,693.0 h5 v3 l-2,2 h-1 l-2,-2 z"/>
<path d="M489.0,683.0 h9 v4 l-3,3 h-3 l-3,-3 z M491.0,693.0 h5 v3 l-2,2 h-1 l-2,-2 z"/>
<path d="M564.0,683.0 h9 v4 l-3,3 h-3 l-3,-3 z M566.0,693.0 h5 v3 l-2,2 h-1 l-2,-2 z"/>
<path d="M633.0,683.0 h9 v4 l-3,3 h-3 l-3,-3 z M635.0,693.0 h5 v3 l-2,2 h-1 l-2,-2 z"/>
<path d="M708.0,674.0 h9 v4 l-3,3 h-3 l-3,-3 z M710.0,684.0 h5 v3 l-2,2 h-1 l-2,-2 z"/>
<path d="M814.5,654.5 h9 v4 l-3,3 h-3 l-3,-3 z M816.5,664.5 h5 v3 l-2,2 h-1 l-2,-2 z"/>
<path d="M848.5,654.5 h9 v4 l-3,3 h-3 l-3,-3 z M850.5,664.5 h5 v3 l-2,2 h-1 l-2,-2 z"/>
<path d="M893.0,722.0 h9 v4 l-3,3 h-3 l-3,-3 z M895.0,732.0 h5 v3 l-2,2 h-1 l-2,-2 z"/>
<path d="M784.5,727.0 h9 v4 l-3,3 h-3 l-3,-3 z M786.5,737.0 h5 v3 l-2,2 h-1 l-2,-2 z"/>
<path d="M612.0,760.0 h9 v4 l-3,3 h-3 l-3,-3 z M614.0,770.0 h5 v3 l-2,2 h-1 l-2,-2 z"/>
<path d="M439.0,762.0 h9 v4 l-3,3 h-3 l-3,-3 z M441.0,772.0 h5 v3 l-2,2 h-1 l-2,-2 z"/>
<path d="M612.0,800.0 h9 v4 l-3,3 h-3 l-3,-3 z M614.0,810.0 h5 v3 l-2,2 h-1 l-2,-2 z"/>
<path d="M984.0,721.0 h9 v4 l-3,3 h-3 l-3,-3 z M986.0,731.0 h5 v3 l-2,2 h-1 l-2,-2 z"/>
<path d="M707.8,823.5 h9 v4 l-3,3 h-3 l-3,-3 z M709.8,833.5 h5 v3 l-2,2 h-1 l-2,-2 z"/>
<path d="M788.0,820.0 h9 v4 l-3,3 h-3 l-3,-3 z M790.0,830.0 h5 v3 l-2,2 h-1 l-2,-2 z"/>
<path d="M834.0,799.0 h9 v4 l-3,3 h-3 l-3,-3 z M836.0,809.0 h5 v3 l-2,2 h-1 l-2,-2 z"/>
<path d="M832.5,834.0 h9 v4 l-3,3 h-3 l-3,-3 z M834.5,844.0 h5 v3 l-2,2 h-1 l-2,-2 z"/>
<path d="M946.5,837.0 h9 v4 l-3,3 h-3 l-3,-3 z M948.5,847.0 h5 v3 l-2,2 h-1 l-2,-2 z"/>
<path d="M977.5,781.0 h9 v4 l-3,3 h-3 l-3,-3 z M979.5,791.0 h5 v3 l-2,2 h-1 l-2,-2 z"/>
<path d="M503.0,840.0 h9 v4 l-3,3 h-3 l-3,-3 z M505.0,850.0 h5 v3 l-2,2 h-1 l-2,-2 z"/>
<path d="M503.0,866.0 h9 v4 l-3,3 h-3 l-3,-3 z M505.0,876.0 h5 v3 l-2,2 h-1 l-2,-2 z"/>
<path d="M427.0,855.0 h9 v4 l-3,3 h-3 l-3,-3 z M429.0,865.0 h5 v3 l-2,2 h-1 l-2,-2 z"/>
<path d="M563.5,888.0 h9 v4 l-3,3 h-3 l-3,-3 z M565.5,898.0 h5 v3 l-2,2 h-1 l-2,-2 z"/>
<path d="M633.0,888.0 h9 v4 l-3,3 h-3 l-3,-3 z M635.0,898.0 h5 v3 l-2,2 h-1 l-2,-2 z"/>
<path d="M706.0,888.0 h9 v4 l-3,3 h-3 l-3,-3 z M708.0,898.0 h5 v3 l-2,2 h-1 l-2,-2 z"/>
<path d="M911.0,900.5 h9 v4 l-3,3 h-3 l-3,-3 z M913.0,910.5 h5 v3 l-2,2 h-1 l-2,-2 z"/>
<path d="M309.0,750.5 h9 v4 l-3,3 h-3 l-3,-3 z M311.0,760.5 h5 v3 l-2,2 h-1 l-2,-2 z"/>
<path d="M309.0,775.8 h9 v4 l-3,3 h-3 l-3,-3 z M311.0,785.8 h5 v3 l-2,2 h-1 l-2,-2 z"/>
<path d="M309.0,809.7 h9 v4 l-3,3 h-3 l-3,-3 z M311.0,819.7 h5 v3 l-2,2 h-1 l-2,-2 z"/>
<path d="M309.0,845.3 h9 v4 l-3,3 h-3 l-3,-3 z M311.0,855.3 h5 v3 l-2,2 h-1 l-2,-2 z"/>
<path d="M309.0,913.0 h9 v4 l-3,3 h-3 l-3,-3 z M311.0,923.0 h5 v3 l-2,2 h-1 l-2,-2 z"/>
</g><g fill="#95c96a">
<rect x="383" y="608" width="10" height="16"/>
<rect x="385" y="611" width="2" height="1.5" fill="#fff"/>
<rect x="388" y="615" width="2" height="1.5" fill="#fff"/>
<rect x="385" y="619" width="2" height="1.5" fill="#fff"/>
<rect x="415" y="615" width="9" height="9"/>
<rect x="417" y="618" width="2" height="1.5" fill="#fff"/>
<rect x="419" y="622" width="2" height="1.5" fill="#fff"/>
<rect x="454" y="608" width="11" height="16"/>
<rect x="456" y="611" width="2" height="1.5" fill="#fff"/>
<rect x="460" y="615" width="2" height="1.5" fill="#fff"/>
<rect x="456" y="619" width="2" height="1.5" fill="#fff"/>
<rect x="498" y="604" width="11" height="29"/>
<rect x="500" y="607" width="2" height="1.5" fill="#fff"/>
<rect x="504" y="611" width="2" height="1.5" fill="#fff"/>
<rect x="500" y="615" width="2" height="1.5" fill="#fff"/>
<rect x="504" y="619" width="2" height="1.5" fill="#fff"/>
<rect x="500" y="623" width="2" height="1.5" fill="#fff"/>
<rect x="504" y="627" width="2" height="1.5" fill="#fff"/>
<rect x="500" y="631" width="2" height="1.5" fill="#fff"/>
<rect x="575" y="604" width="11" height="29"/>
<rect x="577" y="607" width="2" height="1.5" fill="#fff"/>
<rect x="581" y="611" width="2" height="1.5" fill="#fff"/>
<rect x="577" y="615" width="2" height="1.5" fill="#fff"/>
<rect x="581" y="619" width="2" height="1.5" fill="#fff"/>
<rect x="577" y="623" width="2" height="1.5" fill="#fff"/>
<rect x="581" y="627" width="2" height="1.5" fill="#fff"/>
<rect x="577" y="631" width="2" height="1.5" fill="#fff"/>
<rect x="647" y="604" width="11" height="29"/>
<rect x="649" y="607" width="2" height="1.5" fill="#fff"/>
<rect x="653" y="611" width="2" height="1.5" fill="#fff"/>
<rect x="649" y="615" width="2" height="1.5" fill="#fff"/>
<rect x="653" y="619" width="2" height="1.5" fill="#fff"/>
<rect x="649" y="623" width="2" height="1.5" fill="#fff"/>
<rect x="653" y="627" width="2" height="1.5" fill="#fff"/>
<rect x="649" y="631" width="2" height="1.5" fill="#fff"/>
<rect x="722" y="604" width="11" height="29"/>
<rect x="724" y="607" width="2" height="1.5" fill="#fff"/>
<rect x="728" y="611" width="2" height="1.5" fill="#fff"/>
<rect x="724" y="615" width="2" height="1.5" fill="#fff"/>
<rect x="728" y="619" width="2" height="1.5" fill="#fff"/>
<rect x="724" y="623" width="2" height="1.5" fill="#fff"/>
<rect x="728" y="627" width="2" height="1.5" fill="#fff"/>
<rect x="724" y="631" width="2" height="1.5" fill="#fff"/>
<rect x="795" y="604" width="12" height="29"/>
<rect x="797" y="607" width="2" height="1.5" fill="#fff"/>
<rect x="802" y="611" width="2" height="1.5" fill="#fff"/>
<rect x="797" y="615" width="2" height="1.5" fill="#fff"/>
<rect x="802" y="619" width="2" height="1.5" fill="#fff"/>
<rect x="797" y="623" width="2" height="1.5" fill="#fff"/>
<rect x="802" y="627" width="2" height="1.5" fill="#fff"/>
<rect x="797" y="631" width="2" height="1.5" fill="#fff"/>
<rect x="843" y="618" width="8" height="10"/>
<rect x="845" y="621" width="2" height="1.5" fill="#fff"/>
<rect x="846" y="625" width="2" height="1.5" fill="#fff"/>
<rect x="904" y="680" width="10" height="18"/>
<rect x="906" y="683" width="2" height="1.5" fill="#fff"/>
<rect x="909" y="687" width="2" height="1.5" fill="#fff"/>
<rect x="906" y="691" width="2" height="1.5" fill="#fff"/>
<rect x="909" y="695" width="2" height="1.5" fill="#fff"/>
<rect x="311" y="720" width="10" height="14"/>
<rect x="313" y="723" width="2" height="1.5" fill="#fff"/>
<rect x="316" y="727" width="2" height="1.5" fill="#fff"/>
<rect x="313" y="731" width="2" height="1.5" fill="#fff"/>
<rect x="515" y="944" width="10" height="8"/>
<rect x="517" y="947" width="2" height="1.5" fill="#fff"/>
<rect x="589" y="944" width="10" height="22"/>
<rect x="591" y="947" width="2" height="1.5" fill="#fff"/>
<rect x="594" y="951" width="2" height="1.5" fill="#fff"/>
<rect x="591" y="955" width="2" height="1.5" fill="#fff"/>
<rect x="594" y="959" width="2" height="1.5" fill="#fff"/>
<rect x="591" y="963" width="2" height="1.5" fill="#fff"/>
<rect x="663" y="944" width="10" height="22"/>
<rect x="665" y="947" width="2" height="1.5" fill="#fff"/>
<rect x="668" y="951" width="2" height="1.5" fill="#fff"/>
<rect x="665" y="955" width="2" height="1.5" fill="#fff"/>
<rect x="668" y="959" width="2" height="1.5" fill="#fff"/>
<rect x="665" y="963" width="2" height="1.5" fill="#fff"/>
<rect x="738" y="944" width="9" height="22"/>
<rect x="740" y="947" width="2" height="1.5" fill="#fff"/>
<rect x="742" y="951" width="2" height="1.5" fill="#fff"/>
<rect x="740" y="955" width="2" height="1.5" fill="#fff"/>
<rect x="742" y="959" width="2" height="1.5" fill="#fff"/>
<rect x="740" y="963" width="2" height="1.5" fill="#fff"/>
<rect x="838" y="740" width="10" height="16"/>
<rect x="840" y="743" width="2" height="1.5" fill="#fff"/>
<rect x="843" y="747" width="2" height="1.5" fill="#fff"/>
<rect x="840" y="751" width="2" height="1.5" fill="#fff"/>
<rect x="384" y="640" width="5" height="6" fill="#4f9a1f"/>
<rect x="404" y="642" width="5" height="5" fill="#4f9a1f"/>
<rect x="417" y="640" width="5" height="5" fill="#4f9a1f"/>
<rect x="456" y="638" width="5" height="4" fill="#4f9a1f"/>
<rect x="360" y="730" width="5" height="7" fill="#4f9a1f"/>
<rect x="503" y="651" width="5" height="4" fill="#4f9a1f"/>
<rect x="578" y="651" width="5" height="4" fill="#4f9a1f"/>
<rect x="648" y="651" width="5" height="4" fill="#4f9a1f"/>
<rect x="799" y="641" width="4" height="6" fill="#4f9a1f"/>
<rect x="880" y="683" width="4" height="4" fill="#4f9a1f"/>
<rect x="518" y="920" width="5" height="4" fill="#4f9a1f"/>
<rect x="594" y="920" width="5" height="4" fill="#4f9a1f"/>
<rect x="668" y="921" width="5" height="4" fill="#4f9a1f"/>
<rect x="817" y="872" width="12" height="5" fill="#4f9a1f"/>
<rect x="862" y="876" width="18" height="6" fill="#4f9a1f"/>
</g>
<path d="M851.3,753.2 L860.9,743.6 L871.7,743.6 L882.5,753.2 Z M862.7,743.6 V753.2 M871.7,743.6 V753.2" fill="none" stroke="#4f9a1f" stroke-width="1.6"/>
</svg>
<div class="t" style="left:171.05px;top:1150.00px;font-size:24px;line-height:24px;color:#3b3b3b;font-weight:normal;letter-spacing:0.11px;">Erste Zeile von mehrzeiligen Werten</div>
<div class="r" style="left:618px;top:1146px;width:30px;height:30px"><svg width="30" height="30" viewBox="0 0 30 30" style="position:absolute;left:0;top:0"><rect x="1.5" y="1.5" width="26.5" height="26.5" fill="#fff" stroke="#9a9a9a" stroke-width="3"/></svg></div>
<div class="t" style="left:691.00px;top:1150.00px;font-size:24px;line-height:24px;color:#3b3b3b;font-weight:normal;letter-spacing:-0.165px;">Suche in allen Layern</div>
<div class="r" style="left:1108px;top:1146px;width:30px;height:30px"><svg width="30" height="30" viewBox="0 0 30 30" style="position:absolute;left:0;top:0"><rect x="1.5" y="1.5" width="26.5" height="26.5" fill="#fff" stroke="#9a9a9a" stroke-width="3"/><polyline points="5.5,16.5 10.5,21 24.5,7.5" fill="none" stroke="#8a8a8a" stroke-width="2"/></svg></div>
<div class="t" style="left:170.00px;top:1205.10px;font-size:24px;line-height:24px;color:#3b3b3b;font-weight:normal;letter-spacing:0.687px;">Hintergrundfarbe</div>
<div class="r" style="left:395px;top:1194px;width:251px;height:40px;border:2px solid #d9d9d9;background:#fff"></div>
<div class="r" style="left:399px;top:1197px;width:28px;height:34px;border:2px solid #a4a4a4;background:#fff"></div>
<div class="t" style="left:436.40px;top:1205.10px;font-size:24px;line-height:24px;color:#3b3b3b;font-weight:normal;letter-spacing:-0.333px;">Wei&szlig;</div>
<svg class="r" style="left:622px;top:1210px" width="20" height="14"><path d="M1 2 L17 2 L9 12 Z" fill="#555"/></svg>
<div class="t" style="left:688.70px;top:1205.10px;font-size:24px;line-height:24px;color:#3b3b3b;font-weight:normal;letter-spacing:0.415px;">Gruppenabstand</div>
<div class="r" style="left:1024px;top:1194px;width:112px;height:40px;border:2px solid #d9d9d9;background:#fff"></div>
<div class="t" style="left:1027.00px;top:1205.10px;font-size:24px;line-height:24px;color:#3b3b3b;font-weight:normal;letter-spacing:0.0px;">5</div>
<svg class="r" style="left:1110px;top:1200px" width="22" height="34"><path d="M3 11 L19 11 L11 2 Z M3 21 L19 21 L11 30 Z" fill="#555"/></svg>
<div class="t" style="left:172.00px;top:1256.90px;font-size:24px;line-height:24px;color:#3b3b3b;font-weight:normal;letter-spacing:-0.055px;">Ausgew&auml;hltes Element:</div>
<div class="t" style="left:688.70px;top:1256.90px;font-size:24px;line-height:24px;color:#3b3b3b;font-weight:normal;letter-spacing:0.146px;">Schwellwert f&uuml;r Erkennung</div>
<div class="r" style="left:1024px;top:1247px;width:112px;height:40px;border:2px solid #d9d9d9;background:#fff"></div>
<div class="t" style="left:1027.00px;top:1256.90px;font-size:24px;line-height:24px;color:#3b3b3b;font-weight:normal;letter-spacing:1.0px;">80</div>
<svg class="r" style="left:1110px;top:1253px" width="22" height="34"><path d="M3 11 L19 11 L11 2 Z M3 21 L19 21 L11 30 Z" fill="#555"/></svg>
<div class="t" style="left:178.70px;top:1308.00px;font-size:24px;line-height:24px;color:#3b3b3b;font-weight:normal;letter-spacing:-0.712px;">- Ebene: 1180_BES_440_INS-ELT_KG_001$0$000_RST_ALL</div>
<div class="t" style="left:1189.80px;top:347.90px;font-size:42px;line-height:42px;color:#333;font-weight:bold;letter-spacing:0.0px;">2</div>
<div class="t" style="left:1228.00px;top:359.10px;font-size:24px;line-height:24px;color:#3b3b3b;font-weight:normal;letter-spacing:-0.133px;">Eigenschaften zuweisen</div>
<div class="r" style="left:1199px;top:406px;width:1007px;height:171px;border:2px solid #dadada;background:#fff"></div>
<div class="r" style="left:1201px;top:409px;width:224px;height:46px;background:#feefc5"></div>
<div class="r" style="left:1201px;top:455px;width:1008px;height:2px;background:#dcdcdc"></div>
<div class="r" style="left:1201px;top:501px;width:1008px;height:2px;background:#dcdcdc"></div>
<div class="r" style="left:1201px;top:547px;width:1008px;height:2px;background:#dcdcdc"></div>
<div class="r" style="left:1425px;top:409px;width:2px;height:138px;background:#dcdcdc"></div>
<div class="r" style="left:1427px;top:410px;width:781px;height:45px;background:#fff;outline:2px dotted #222;outline-offset:-2px"></div>
<div class="r" style="left:1199px;top:406px;width:2px;height:175px;background:#d0d0d0"></div>
<div class="t" style="left:1237.00px;top:421.60px;font-size:24px;line-height:24px;color:#3b3b3b;font-weight:normal;letter-spacing:1.0px;">Nummer</div>
<div class="t" style="left:1237.00px;top:468.00px;font-size:24px;line-height:24px;color:#3b3b3b;font-weight:normal;letter-spacing:0.667px;">Name</div>
<div class="t" style="left:1237.00px;top:514.10px;font-size:24px;line-height:24px;color:#3b3b3b;font-weight:normal;letter-spacing:0.03px;">Fl&auml;che [m<sup style="font-size:14px;vertical-align:9px;line-height:0">2</sup>]</div>
<div class="t" style="left:1429.80px;top:421.10px;font-size:24px;line-height:24px;color:#3b3b3b;font-weight:normal;letter-spacing:-1.043px;">RAUMBEZ1</div>
<svg class="r" style="left:2178px;top:427px" width="20" height="14"><path d="M1 1 L17 1 L9 10 Z" fill="#555"/></svg>
<div class="t" style="left:1189.80px;top:612.90px;font-size:42px;line-height:42px;color:#333;font-weight:bold;letter-spacing:0.0px;">3</div>
<div class="r" style="left:1228px;top:615px;width:534px;height:45px;overflow:hidden">
<div class="t" style="left:0.5px;top:10.90px;font-size:24px;line-height:24px;color:#3b3b3b;letter-spacing:0.05px">Liste der gefundenen R&auml;ume zum Nachbearbeiten</div>
</div>
<div class="r" style="left:1769px;top:620px;width:30px;height:30px"><svg width="30" height="30" viewBox="0 0 30 30" style="position:absolute;left:0;top:0"><rect x="1.5" y="1.5" width="26.5" height="26.5" fill="#fff" stroke="#9a9a9a" stroke-width="3"/><polyline points="5.5,16.5 10.5,21 24.5,7.5" fill="none" stroke="#8a8a8a" stroke-width="2"/></svg></div>
<div class="r" style="left:1911px;top:620px;width:30px;height:30px"><svg width="30" height="30" viewBox="0 0 30 30" style="position:absolute;left:0;top:0"><rect x="1.5" y="1.5" width="26.5" height="26.5" fill="#fff" stroke="#9a9a9a" stroke-width="3"/><polyline points="5.5,16.5 10.5,21 24.5,7.5" fill="none" stroke="#8a8a8a" stroke-width="2"/></svg></div>
<div class="r" style="left:2054px;top:620px;width:30px;height:30px"><svg width="30" height="30" viewBox="0 0 30 30" style="position:absolute;left:0;top:0"><rect x="1.5" y="1.5" width="26.5" height="26.5" fill="#fff" stroke="#9a9a9a" stroke-width="3"/><polyline points="5.5,16.5 10.5,21 24.5,7.5" fill="none" stroke="#8a8a8a" stroke-width="2"/></svg></div>
<div class="r" style="left:1200px;top:668px;width:943px;height:45px;background:#3f3f3f"></div>
<div class="r" style="left:1200px;top:713px;width:943px;height:607px;overflow:hidden">
<div class="r" style="left:0;top:0px;width:943px;height:43px;background:#dcdcdc"></div>
<div class="r" style="left:254px;top:0px;width:1px;height:43px;background:#d6d6d6"></div>
<div class="r" style="left:507px;top:0px;width:1px;height:43px;background:#d6d6d6"></div>
<div class="r" style="left:640px;top:0px;width:1px;height:43px;background:#d6d6d6"></div>
<div class="r" style="left:808px;top:0px;width:1px;height:43px;background:#d6d6d6"></div>
<div class="t" style="left:2.80px;top:9.20px;font-size:24px;line-height:24px;color:#3b3b3b;letter-spacing:0.467px">Flur</div>
<div class="t" style="left:258.00px;top:9.20px;font-size:24px;line-height:24px;color:#3b3b3b;letter-spacing:0.96px">Nummer</div>
<div class="r" style="left:558px;top:5px;width:30px;height:30px"><svg width="30" height="30" viewBox="0 0 30 30" style="position:absolute;left:0;top:0"><rect x="1.5" y="1.5" width="26.5" height="26.5" fill="#fff" stroke="#9a9a9a" stroke-width="3"/><polyline points="5.5,16.5 10.5,21 24.5,7.5" fill="none" stroke="#8a8a8a" stroke-width="2"/></svg></div>
<div class="r" style="left:708px;top:5px;width:30px;height:30px"><svg width="30" height="30" viewBox="0 0 30 30" style="position:absolute;left:0;top:0"><rect x="1.5" y="1.5" width="26.5" height="26.5" fill="#fff" stroke="#9a9a9a" stroke-width="3"/><polyline points="5.5,16.5 10.5,21 24.5,7.5" fill="none" stroke="#8a8a8a" stroke-width="2"/></svg></div>
<div class="r" style="left:859px;top:5px;width:30px;height:30px"><svg width="30" height="30" viewBox="0 0 30 30" style="position:absolute;left:0;top:0"><rect x="1.5" y="1.5" width="26.5" height="26.5" fill="#fff" stroke="#9a9a9a" stroke-width="3"/><polyline points="5.5,16.5 10.5,21 24.5,7.5" fill="none" stroke="#8a8a8a" stroke-width="2"/></svg></div>
<div class="r" style="left:0;top:43px;width:943px;height:43px;background:#fff"></div>
<div class="r" style="left:254px;top:43px;width:1px;height:43px;background:#e2e2e2"></div>
<div class="r" style="left:507px;top:43px;width:1px;height:43px;background:#e2e2e2"></div>
<div class="r" style="left:640px;top:43px;width:1px;height:43px;background:#e2e2e2"></div>
<div class="r" style="left:808px;top:43px;width:1px;height:43px;background:#e2e2e2"></div>
<div class="r" style="left:941px;top:43px;width:2px;height:43px;background:#dcdcdc"></div>
<div class="t" style="left:3.80px;top:52.20px;font-size:24px;line-height:24px;color:#3b3b3b;letter-spacing:0.05px">Treppenhaus</div>
<div class="t" style="left:258.00px;top:52.20px;font-size:24px;line-height:24px;color:#3b3b3b;letter-spacing:0.96px">Nummer</div>
<div class="r" style="left:558px;top:48px;width:30px;height:30px"><svg width="30" height="30" viewBox="0 0 30 30" style="position:absolute;left:0;top:0"><rect x="1.5" y="1.5" width="26.5" height="26.5" fill="#fff" stroke="#9a9a9a" stroke-width="3"/><polyline points="5.5,16.5 10.5,21 24.5,7.5" fill="none" stroke="#8a8a8a" stroke-width="2"/></svg></div>
<div class="r" style="left:708px;top:48px;width:30px;height:30px"><svg width="30" height="30" viewBox="0 0 30 30" style="position:absolute;left:0;top:0"><rect x="1.5" y="1.5" width="26.5" height="26.5" fill="#fff" stroke="#9a9a9a" stroke-width="3"/><polyline points="5.5,16.5 10.5,21 24.5,7.5" fill="none" stroke="#8a8a8a" stroke-width="2"/></svg></div>
<div class="r" style="left:859px;top:48px;width:30px;height:30px"><svg width="30" height="30" viewBox="0 0 30 30" style="position:absolute;left:0;top:0"><rect x="1.5" y="1.5" width="26.5" height="26.5" fill="#fff" stroke="#9a9a9a" stroke-width="3"/><polyline points="5.5,16.5 10.5,21 24.5,7.5" fill="none" stroke="#8a8a8a" stroke-width="2"/></svg></div>
<div class="r" style="left:0;top:86px;width:943px;height:42px;background:#dcdcdc"></div>
<div class="r" style="left:254px;top:86px;width:1px;height:42px;background:#d6d6d6"></div>
<div class="r" style="left:507px;top:86px;width:1px;height:42px;background:#d6d6d6"></div>
<div class="r" style="left:640px;top:86px;width:1px;height:42px;background:#d6d6d6"></div>
<div class="r" style="left:808px;top:86px;width:1px;height:42px;background:#d6d6d6"></div>
<div class="t" style="left:3.80px;top:95.20px;font-size:24px;line-height:24px;color:#3b3b3b;letter-spacing:0.05px">Treppenhaus</div>
<div class="t" style="left:258.00px;top:95.20px;font-size:24px;line-height:24px;color:#3b3b3b;letter-spacing:0.96px">Nummer</div>
<div class="r" style="left:558px;top:91px;width:30px;height:30px"><svg width="30" height="30" viewBox="0 0 30 30" style="position:absolute;left:0;top:0"><rect x="1.5" y="1.5" width="26.5" height="26.5" fill="#fff" stroke="#9a9a9a" stroke-width="3"/><polyline points="5.5,16.5 10.5,21 24.5,7.5" fill="none" stroke="#8a8a8a" stroke-width="2"/></svg></div>
<div class="r" style="left:708px;top:91px;width:30px;height:30px"><svg width="30" height="30" viewBox="0 0 30 30" style="position:absolute;left:0;top:0"><rect x="1.5" y="1.5" width="26.5" height="26.5" fill="#fff" stroke="#9a9a9a" stroke-width="3"/><polyline points="5.5,16.5 10.5,21 24.5,7.5" fill="none" stroke="#8a8a8a" stroke-width="2"/></svg></div>
<div class="r" style="left:859px;top:91px;width:30px;height:30px"><svg width="30" height="30" viewBox="0 0 30 30" style="position:absolute;left:0;top:0"><rect x="1.5" y="1.5" width="26.5" height="26.5" fill="#fff" stroke="#9a9a9a" stroke-width="3"/><polyline points="5.5,16.5 10.5,21 24.5,7.5" fill="none" stroke="#8a8a8a" stroke-width="2"/></svg></div>
<div class="r" style="left:0;top:128px;width:943px;height:43px;background:#fff"></div>
<div class="r" style="left:254px;top:128px;width:1px;height:43px;background:#e2e2e2"></div>
<div class="r" style="left:507px;top:128px;width:1px;height:43px;background:#e2e2e2"></div>
<div class="r" style="left:640px;top:128px;width:1px;height:43px;background:#e2e2e2"></div>
<div class="r" style="left:808px;top:128px;width:1px;height:43px;background:#e2e2e2"></div>
<div class="r" style="left:941px;top:128px;width:2px;height:43px;background:#dcdcdc"></div>
<div class="t" style="left:4.20px;top:137.20px;font-size:24px;line-height:24px;color:#3b3b3b;letter-spacing:0.429px">Verteilungsraum</div>
<div class="t" style="left:258.00px;top:137.20px;font-size:24px;line-height:24px;color:#3b3b3b;letter-spacing:0.96px">Nummer</div>
<div class="r" style="left:558px;top:133px;width:30px;height:30px"><svg width="30" height="30" viewBox="0 0 30 30" style="position:absolute;left:0;top:0"><rect x="1.5" y="1.5" width="26.5" height="26.5" fill="#fff" stroke="#9a9a9a" stroke-width="3"/><polyline points="5.5,16.5 10.5,21 24.5,7.5" fill="none" stroke="#8a8a8a" stroke-width="2"/></svg></div>
<div class="r" style="left:708px;top:133px;width:30px;height:30px"><svg width="30" height="30" viewBox="0 0 30 30" style="position:absolute;left:0;top:0"><rect x="1.5" y="1.5" width="26.5" height="26.5" fill="#fff" stroke="#9a9a9a" stroke-width="3"/><polyline points="5.5,16.5 10.5,21 24.5,7.5" fill="none" stroke="#8a8a8a" stroke-width="2"/></svg></div>
<div class="r" style="left:859px;top:133px;width:30px;height:30px"><svg width="30" height="30" viewBox="0 0 30 30" style="position:absolute;left:0;top:0"><rect x="1.5" y="1.5" width="26.5" height="26.5" fill="#fff" stroke="#9a9a9a" stroke-width="3"/><polyline points="5.5,16.5 10.5,21 24.5,7.5" fill="none" stroke="#8a8a8a" stroke-width="2"/></svg></div>
<div class="r" style="left:0;top:171px;width:943px;height:43px;background:#dcdcdc"></div>
<div class="r" style="left:254px;top:171px;width:1px;height:43px;background:#d6d6d6"></div>
<div class="r" style="left:507px;top:171px;width:1px;height:43px;background:#d6d6d6"></div>
<div class="r" style="left:640px;top:171px;width:1px;height:43px;background:#d6d6d6"></div>
<div class="r" style="left:808px;top:171px;width:1px;height:43px;background:#d6d6d6"></div>
<div class="t" style="left:2.80px;top:180.20px;font-size:24px;line-height:24px;color:#3b3b3b;letter-spacing:0.467px">Flur</div>
<div class="t" style="left:258.00px;top:180.20px;font-size:24px;line-height:24px;color:#3b3b3b;letter-spacing:0.96px">Nummer</div>
<div class="r" style="left:558px;top:176px;width:30px;height:30px"><svg width="30" height="30" viewBox="0 0 30 30" style="position:absolute;left:0;top:0"><rect x="1.5" y="1.5" width="26.5" height="26.5" fill="#fff" stroke="#9a9a9a" stroke-width="3"/><polyline points="5.5,16.5 10.5,21 24.5,7.5" fill="none" stroke="#8a8a8a" stroke-width="2"/></svg></div>
<div class="r" style="left:708px;top:176px;width:30px;height:30px"><svg width="30" height="30" viewBox="0 0 30 30" style="position:absolute;left:0;top:0"><rect x="1.5" y="1.5" width="26.5" height="26.5" fill="#fff" stroke="#9a9a9a" stroke-width="3"/><polyline points="5.5,16.5 10.5,21 24.5,7.5" fill="none" stroke="#8a8a8a" stroke-width="2"/></svg></div>
<div class="r" style="left:859px;top:176px;width:30px;height:30px"><svg width="30" height="30" viewBox="0 0 30 30" style="position:absolute;left:0;top:0"><rect x="1.5" y="1.5" width="26.5" height="26.5" fill="#fff" stroke="#9a9a9a" stroke-width="3"/><polyline points="5.5,16.5 10.5,21 24.5,7.5" fill="none" stroke="#8a8a8a" stroke-width="2"/></svg></div>
<div class="r" style="left:0;top:214px;width:943px;height:43px;background:#fff"></div>
<div class="r" style="left:254px;top:214px;width:1px;height:43px;background:#e2e2e2"></div>
<div class="r" style="left:507px;top:214px;width:1px;height:43px;background:#e2e2e2"></div>
<div class="r" style="left:640px;top:214px;width:1px;height:43px;background:#e2e2e2"></div>
<div class="r" style="left:808px;top:214px;width:1px;height:43px;background:#e2e2e2"></div>
<div class="r" style="left:941px;top:214px;width:2px;height:43px;background:#dcdcdc"></div>
<div class="t" style="left:3.50px;top:223.20px;font-size:24px;line-height:24px;color:#3b3b3b;letter-spacing:0.233px">B&uuml;ro</div>
<div class="t" style="left:258.00px;top:223.20px;font-size:24px;line-height:24px;color:#3b3b3b;letter-spacing:0.96px">Nummer</div>
<div class="r" style="left:558px;top:219px;width:30px;height:30px"><svg width="30" height="30" viewBox="0 0 30 30" style="position:absolute;left:0;top:0"><rect x="1.5" y="1.5" width="26.5" height="26.5" fill="#fff" stroke="#9a9a9a" stroke-width="3"/><polyline points="5.5,16.5 10.5,21 24.5,7.5" fill="none" stroke="#8a8a8a" stroke-width="2"/></svg></div>
<div class="r" style="left:708px;top:219px;width:30px;height:30px"><svg width="30" height="30" viewBox="0 0 30 30" style="position:absolute;left:0;top:0"><rect x="1.5" y="1.5" width="26.5" height="26.5" fill="#fff" stroke="#9a9a9a" stroke-width="3"/><polyline points="5.5,16.5 10.5,21 24.5,7.5" fill="none" stroke="#8a8a8a" stroke-width="2"/></svg></div>
<div class="r" style="left:859px;top:219px;width:30px;height:30px"><svg width="30" height="30" viewBox="0 0 30 30" style="position:absolute;left:0;top:0"><rect x="1.5" y="1.5" width="26.5" height="26.5" fill="#fff" stroke="#9a9a9a" stroke-width="3"/><polyline points="5.5,16.5 10.5,21 24.5,7.5" fill="none" stroke="#8a8a8a" stroke-width="2"/></svg></div>
<div class="r" style="left:0;top:257px;width:943px;height:42px;background:#dcdcdc"></div>
<div class="r" style="left:254px;top:257px;width:1px;height:42px;background:#d6d6d6"></div>
<div class="r" style="left:507px;top:257px;width:1px;height:42px;background:#d6d6d6"></div>
<div class="r" style="left:640px;top:257px;width:1px;height:42px;background:#d6d6d6"></div>
<div class="r" style="left:808px;top:257px;width:1px;height:42px;background:#d6d6d6"></div>
<div class="t" style="left:3.50px;top:266.20px;font-size:24px;line-height:24px;color:#3b3b3b;letter-spacing:0.233px">B&uuml;ro</div>
<div class="t" style="left:258.00px;top:266.20px;font-size:24px;line-height:24px;color:#3b3b3b;letter-spacing:0.96px">Nummer</div>
<div class="r" style="left:558px;top:262px;width:30px;height:30px"><svg width="30" height="30" viewBox="0 0 30 30" style="position:absolute;left:0;top:0"><rect x="1.5" y="1.5" width="26.5" height="26.5" fill="#fff" stroke="#9a9a9a" stroke-width="3"/><polyline points="5.5,16.5 10.5,21 24.5,7.5" fill="none" stroke="#8a8a8a" stroke-width="2"/></svg></div>
<div class="r" style="left:708px;top:262px;width:30px;height:30px"><svg width="30" height="30" viewBox="0 0 30 30" style="position:absolute;left:0;top:0"><rect x="1.5" y="1.5" width="26.5" height="26.5" fill="#fff" stroke="#9a9a9a" stroke-width="3"/><polyline points="5.5,16.5 10.5,21 24.5,7.5" fill="none" stroke="#8a8a8a" stroke-width="2"/></svg></div>
<div class="r" style="left:859px;top:262px;width:30px;height:30px"><svg width="30" height="30" viewBox="0 0 30 30" style="position:absolute;left:0;top:0"><rect x="1.5" y="1.5" width="26.5" height="26.5" fill="#fff" stroke="#9a9a9a" stroke-width="3"/><polyline points="5.5,16.5 10.5,21 24.5,7.5" fill="none" stroke="#8a8a8a" stroke-width="2"/></svg></div>
<div class="r" style="left:0;top:299px;width:943px;height:43px;background:#fff"></div>
<div class="r" style="left:254px;top:299px;width:1px;height:43px;background:#e2e2e2"></div>
<div class="r" style="left:507px;top:299px;width:1px;height:43px;background:#e2e2e2"></div>
<div class="r" style="left:640px;top:299px;width:1px;height:43px;background:#e2e2e2"></div>
<div class="r" style="left:808px;top:299px;width:1px;height:43px;background:#e2e2e2"></div>
<div class="r" style="left:941px;top:299px;width:2px;height:43px;background:#dcdcdc"></div>
<div class="t" style="left:3.50px;top:308.20px;font-size:24px;line-height:24px;color:#3b3b3b;letter-spacing:0.233px">B&uuml;ro</div>
<div class="t" style="left:258.00px;top:308.20px;font-size:24px;line-height:24px;color:#3b3b3b;letter-spacing:0.96px">Nummer</div>
<div class="r" style="left:558px;top:304px;width:30px;height:30px"><svg width="30" height="30" viewBox="0 0 30 30" style="position:absolute;left:0;top:0"><rect x="1.5" y="1.5" width="26.5" height="26.5" fill="#fff" stroke="#9a9a9a" stroke-width="3"/><polyline points="5.5,16.5 10.5,21 24.5,7.5" fill="none" stroke="#8a8a8a" stroke-width="2"/></svg></div>
<div class="r" style="left:708px;top:304px;width:30px;height:30px"><svg width="30" height="30" viewBox="0 0 30 30" style="position:absolute;left:0;top:0"><rect x="1.5" y="1.5" width="26.5" height="26.5" fill="#fff" stroke="#9a9a9a" stroke-width="3"/><polyline points="5.5,16.5 10.5,21 24.5,7.5" fill="none" stroke="#8a8a8a" stroke-width="2"/></svg></div>
<div class="r" style="left:859px;top:304px;width:30px;height:30px"><svg width="30" height="30" viewBox="0 0 30 30" style="position:absolute;left:0;top:0"><rect x="1.5" y="1.5" width="26.5" height="26.5" fill="#fff" stroke="#9a9a9a" stroke-width="3"/><polyline points="5.5,16.5 10.5,21 24.5,7.5" fill="none" stroke="#8a8a8a" stroke-width="2"/></svg></div>
<div class="r" style="left:0;top:342px;width:943px;height:43px;background:#dcdcdc"></div>
<div class="r" style="left:254px;top:342px;width:1px;height:43px;background:#d6d6d6"></div>
<div class="r" style="left:507px;top:342px;width:1px;height:43px;background:#d6d6d6"></div>
<div class="r" style="left:640px;top:342px;width:1px;height:43px;background:#d6d6d6"></div>
<div class="r" style="left:808px;top:342px;width:1px;height:43px;background:#d6d6d6"></div>
<div class="t" style="left:2.80px;top:351.20px;font-size:24px;line-height:24px;color:#3b3b3b;letter-spacing:0.467px">Flur</div>
<div class="t" style="left:258.00px;top:351.20px;font-size:24px;line-height:24px;color:#3b3b3b;letter-spacing:0.96px">Nummer</div>
<div class="r" style="left:558px;top:347px;width:30px;height:30px"><svg width="30" height="30" viewBox="0 0 30 30" style="position:absolute;left:0;top:0"><rect x="1.5" y="1.5" width="26.5" height="26.5" fill="#fff" stroke="#9a9a9a" stroke-width="3"/><polyline points="5.5,16.5 10.5,21 24.5,7.5" fill="none" stroke="#8a8a8a" stroke-width="2"/></svg></div>
<div class="r" style="left:708px;top:347px;width:30px;height:30px"><svg width="30" height="30" viewBox="0 0 30 30" style="position:absolute;left:0;top:0"><rect x="1.5" y="1.5" width="26.5" height="26.5" fill="#fff" stroke="#9a9a9a" stroke-width="3"/><polyline points="5.5,16.5 10.5,21 24.5,7.5" fill="none" stroke="#8a8a8a" stroke-width="2"/></svg></div>
<div class="r" style="left:859px;top:347px;width:30px;height:30px"><svg width="30" height="30" viewBox="0 0 30 30" style="position:absolute;left:0;top:0"><rect x="1.5" y="1.5" width="26.5" height="26.5" fill="#fff" stroke="#9a9a9a" stroke-width="3"/><polyline points="5.5,16.5 10.5,21 24.5,7.5" fill="none" stroke="#8a8a8a" stroke-width="2"/></svg></div>
<div class="r" style="left:0;top:385px;width:943px;height:43px;background:#fff"></div>
<div class="r" style="left:254px;top:385px;width:1px;height:43px;background:#e2e2e2"></div>
<div class="r" style="left:507px;top:385px;width:1px;height:43px;background:#e2e2e2"></div>
<div class="r" style="left:640px;top:385px;width:1px;height:43px;background:#e2e2e2"></div>
<div class="r" style="left:808px;top:385px;width:1px;height:43px;background:#e2e2e2"></div>
<div class="r" style="left:941px;top:385px;width:2px;height:43px;background:#dcdcdc"></div>
<div class="t" style="left:3.50px;top:394.20px;font-size:24px;line-height:24px;color:#3b3b3b;letter-spacing:0.233px">B&uuml;ro</div>
<div class="t" style="left:258.00px;top:394.20px;font-size:24px;line-height:24px;color:#3b3b3b;letter-spacing:0.96px">Nummer</div>
<div class="r" style="left:558px;top:390px;width:30px;height:30px"><svg width="30" height="30" viewBox="0 0 30 30" style="position:absolute;left:0;top:0"><rect x="1.5" y="1.5" width="26.5" height="26.5" fill="#fff" stroke="#9a9a9a" stroke-width="3"/><polyline points="5.5,16.5 10.5,21 24.5,7.5" fill="none" stroke="#8a8a8a" stroke-width="2"/></svg></div>
<div class="r" style="left:708px;top:390px;width:30px;height:30px"><svg width="30" height="30" viewBox="0 0 30 30" style="position:absolute;left:0;top:0"><rect x="1.5" y="1.5" width="26.5" height="26.5" fill="#fff" stroke="#9a9a9a" stroke-width="3"/><polyline points="5.5,16.5 10.5,21 24.5,7.5" fill="none" stroke="#8a8a8a" stroke-width="2"/></svg></div>
<div class="r" style="left:859px;top:390px;width:30px;height:30px"><svg width="30" height="30" viewBox="0 0 30 30" style="position:absolute;left:0;top:0"><rect x="1.5" y="1.5" width="26.5" height="26.5" fill="#fff" stroke="#9a9a9a" stroke-width="3"/><polyline points="5.5,16.5 10.5,21 24.5,7.5" fill="none" stroke="#8a8a8a" stroke-width="2"/></svg></div>
<div class="r" style="left:0;top:428px;width:943px;height:42px;background:#dcdcdc"></div>
<div class="r" style="left:254px;top:428px;width:1px;height:42px;background:#d6d6d6"></div>
<div class="r" style="left:507px;top:428px;width:1px;height:42px;background:#d6d6d6"></div>
<div class="r" style="left:640px;top:428px;width:1px;height:42px;background:#d6d6d6"></div>
<div class="r" style="left:808px;top:428px;width:1px;height:42px;background:#d6d6d6"></div>
<div class="t" style="left:3.50px;top:437.20px;font-size:24px;line-height:24px;color:#3b3b3b;letter-spacing:0.233px">B&uuml;ro</div>
<div class="t" style="left:258.00px;top:437.20px;font-size:24px;line-height:24px;color:#3b3b3b;letter-spacing:0.96px">Nummer</div>
<div class="r" style="left:558px;top:433px;width:30px;height:30px"><svg width="30" height="30" viewBox="0 0 30 30" style="position:absolute;left:0;top:0"><rect x="1.5" y="1.5" width="26.5" height="26.5" fill="#fff" stroke="#9a9a9a" stroke-width="3"/><polyline points="5.5,16.5 10.5,21 24.5,7.5" fill="none" stroke="#8a8a8a" stroke-width="2"/></svg></div>
<div class="r" style="left:708px;top:433px;width:30px;height:30px"><svg width="30" height="30" viewBox="0 0 30 30" style="position:absolute;left:0;top:0"><rect x="1.5" y="1.5" width="26.5" height="26.5" fill="#fff" stroke="#9a9a9a" stroke-width="3"/><polyline points="5.5,16.5 10.5,21 24.5,7.5" fill="none" stroke="#8a8a8a" stroke-width="2"/></svg></div>
<div class="r" style="left:859px;top:433px;width:30px;height:30px"><svg width="30" height="30" viewBox="0 0 30 30" style="position:absolute;left:0;top:0"><rect x="1.5" y="1.5" width="26.5" height="26.5" fill="#fff" stroke="#9a9a9a" stroke-width="3"/><polyline points="5.5,16.5 10.5,21 24.5,7.5" fill="none" stroke="#8a8a8a" stroke-width="2"/></svg></div>
<div class="r" style="left:0;top:470px;width:943px;height:43px;background:#fff"></div>
<div class="r" style="left:254px;top:470px;width:1px;height:43px;background:#e2e2e2"></div>
<div class="r" style="left:507px;top:470px;width:1px;height:43px;background:#e2e2e2"></div>
<div class="r" style="left:640px;top:470px;width:1px;height:43px;background:#e2e2e2"></div>
<div class="r" style="left:808px;top:470px;width:1px;height:43px;background:#e2e2e2"></div>
<div class="r" style="left:941px;top:470px;width:2px;height:43px;background:#dcdcdc"></div>
<div class="t" style="left:3.50px;top:479.20px;font-size:24px;line-height:24px;color:#3b3b3b;letter-spacing:0.233px">B&uuml;ro</div>
<div class="t" style="left:258.00px;top:479.20px;font-size:24px;line-height:24px;color:#3b3b3b;letter-spacing:0.96px">Nummer</div>
<div class="r" style="left:558px;top:475px;width:30px;height:30px"><svg width="30" height="30" viewBox="0 0 30 30" style="position:absolute;left:0;top:0"><rect x="1.5" y="1.5" width="26.5" height="26.5" fill="#fff" stroke="#9a9a9a" stroke-width="3"/><polyline points="5.5,16.5 10.5,21 24.5,7.5" fill="none" stroke="#8a8a8a" stroke-width="2"/></svg></div>
<div class="r" style="left:708px;top:475px;width:30px;height:30px"><svg width="30" height="30" viewBox="0 0 30 30" style="position:absolute;left:0;top:0"><rect x="1.5" y="1.5" width="26.5" height="26.5" fill="#fff" stroke="#9a9a9a" stroke-width="3"/><polyline points="5.5,16.5 10.5,21 24.5,7.5" fill="none" stroke="#8a8a8a" stroke-width="2"/></svg></div>
<div class="r" style="left:859px;top:475px;width:30px;height:30px"><svg width="30" height="30" viewBox="0 0 30 30" style="position:absolute;left:0;top:0"><rect x="1.5" y="1.5" width="26.5" height="26.5" fill="#fff" stroke="#9a9a9a" stroke-width="3"/><polyline points="5.5,16.5 10.5,21 24.5,7.5" fill="none" stroke="#8a8a8a" stroke-width="2"/></svg></div>
<div class="r" style="left:0;top:513px;width:943px;height:43px;background:#dcdcdc"></div>
<div class="r" style="left:254px;top:513px;width:1px;height:43px;background:#d6d6d6"></div>
<div class="r" style="left:507px;top:513px;width:1px;height:43px;background:#d6d6d6"></div>
<div class="r" style="left:640px;top:513px;width:1px;height:43px;background:#d6d6d6"></div>
<div class="r" style="left:808px;top:513px;width:1px;height:43px;background:#d6d6d6"></div>
<div class="t" style="left:2.80px;top:522.20px;font-size:24px;line-height:24px;color:#3b3b3b;letter-spacing:0.467px">Flur</div>
<div class="t" style="left:258.00px;top:522.20px;font-size:24px;line-height:24px;color:#3b3b3b;letter-spacing:0.96px">Nummer</div>
<div class="r" style="left:558px;top:518px;width:30px;height:30px"><svg width="30" height="30" viewBox="0 0 30 30" style="position:absolute;left:0;top:0"><rect x="1.5" y="1.5" width="26.5" height="26.5" fill="#fff" stroke="#9a9a9a" stroke-width="3"/><polyline points="5.5,16.5 10.5,21 24.5,7.5" fill="none" stroke="#8a8a8a" stroke-width="2"/></svg></div>
<div class="r" style="left:708px;top:518px;width:30px;height:30px"><svg width="30" height="30" viewBox="0 0 30 30" style="position:absolute;left:0;top:0"><rect x="1.5" y="1.5" width="26.5" height="26.5" fill="#fff" stroke="#9a9a9a" stroke-width="3"/><polyline points="5.5,16.5 10.5,21 24.5,7.5" fill="none" stroke="#8a8a8a" stroke-width="2"/></svg></div>
<div class="r" style="left:859px;top:518px;width:30px;height:30px"><svg width="30" height="30" viewBox="0 0 30 30" style="position:absolute;left:0;top:0"><rect x="1.5" y="1.5" width="26.5" height="26.5" fill="#fff" stroke="#9a9a9a" stroke-width="3"/><polyline points="5.5,16.5 10.5,21 24.5,7.5" fill="none" stroke="#8a8a8a" stroke-width="2"/></svg></div>
<div class="r" style="left:0;top:556px;width:943px;height:43px;background:#fff"></div>
<div class="r" style="left:254px;top:556px;width:1px;height:43px;background:#e2e2e2"></div>
<div class="r" style="left:507px;top:556px;width:1px;height:43px;background:#e2e2e2"></div>
<div class="r" style="left:640px;top:556px;width:1px;height:43px;background:#e2e2e2"></div>
<div class="r" style="left:808px;top:556px;width:1px;height:43px;background:#e2e2e2"></div>
<div class="r" style="left:941px;top:556px;width:2px;height:43px;background:#dcdcdc"></div>
<div class="t" style="left:3.50px;top:565.20px;font-size:24px;line-height:24px;color:#3b3b3b;letter-spacing:0.233px">B&uuml;ro</div>
<div class="t" style="left:258.00px;top:565.20px;font-size:24px;line-height:24px;color:#3b3b3b;letter-spacing:0.96px">Nummer</div>
<div class="r" style="left:558px;top:561px;width:30px;height:30px"><svg width="30" height="30" viewBox="0 0 30 30" style="position:absolute;left:0;top:0"><rect x="1.5" y="1.5" width="26.5" height="26.5" fill="#fff" stroke="#9a9a9a" stroke-width="3"/><polyline points="5.5,16.5 10.5,21 24.5,7.5" fill="none" stroke="#8a8a8a" stroke-width="2"/></svg></div>
<div class="r" style="left:708px;top:561px;width:30px;height:30px"><svg width="30" height="30" viewBox="0 0 30 30" style="position:absolute;left:0;top:0"><rect x="1.5" y="1.5" width="26.5" height="26.5" fill="#fff" stroke="#9a9a9a" stroke-width="3"/><polyline points="5.5,16.5 10.5,21 24.5,7.5" fill="none" stroke="#8a8a8a" stroke-width="2"/></svg></div>
<div class="r" style="left:859px;top:561px;width:30px;height:30px"><svg width="30" height="30" viewBox="0 0 30 30" style="position:absolute;left:0;top:0"><rect x="1.5" y="1.5" width="26.5" height="26.5" fill="#fff" stroke="#9a9a9a" stroke-width="3"/><polyline points="5.5,16.5 10.5,21 24.5,7.5" fill="none" stroke="#8a8a8a" stroke-width="2"/></svg></div>
<div class="r" style="left:0;top:599px;width:943px;height:43px;background:#dcdcdc"></div>
<div class="r" style="left:254px;top:599px;width:1px;height:43px;background:#d6d6d6"></div>
<div class="r" style="left:507px;top:599px;width:1px;height:43px;background:#d6d6d6"></div>
<div class="r" style="left:640px;top:599px;width:1px;height:43px;background:#d6d6d6"></div>
<div class="r" style="left:808px;top:599px;width:1px;height:43px;background:#d6d6d6"></div>
<div class="t" style="left:2.80px;top:608.20px;font-size:24px;line-height:24px;color:#3b3b3b;letter-spacing:0.467px">Flur</div>
<div class="t" style="left:258.00px;top:608.20px;font-size:24px;line-height:24px;color:#3b3b3b;letter-spacing:0.96px">Nummer</div>
<div class="r" style="left:558px;top:604px;width:30px;height:30px"><svg width="30" height="30" viewBox="0 0 30 30" style="position:absolute;left:0;top:0"><rect x="1.5" y="1.5" width="26.5" height="26.5" fill="#fff" stroke="#9a9a9a" stroke-width="3"/><polyline points="5.5,16.5 10.5,21 24.5,7.5" fill="none" stroke="#8a8a8a" stroke-width="2"/></svg></div>
<div class="r" style="left:708px;top:604px;width:30px;height:30px"><svg width="30" height="30" viewBox="0 0 30 30" style="position:absolute;left:0;top:0"><rect x="1.5" y="1.5" width="26.5" height="26.5" fill="#fff" stroke="#9a9a9a" stroke-width="3"/><polyline points="5.5,16.5 10.5,21 24.5,7.5" fill="none" stroke="#8a8a8a" stroke-width="2"/></svg></div>
<div class="r" style="left:859px;top:604px;width:30px;height:30px"><svg width="30" height="30" viewBox="0 0 30 30" style="position:absolute;left:0;top:0"><rect x="1.5" y="1.5" width="26.5" height="26.5" fill="#fff" stroke="#9a9a9a" stroke-width="3"/><polyline points="5.5,16.5 10.5,21 24.5,7.5" fill="none" stroke="#8a8a8a" stroke-width="2"/></svg></div>
</div>
<div class="t" style="left:1214.40px;top:680.40px;font-size:24px;line-height:24px;color:#fff;font-weight:normal;letter-spacing:-0.367px;">Text</div>
<div class="t" style="left:1469.00px;top:680.40px;font-size:24px;line-height:24px;color:#fff;font-weight:normal;letter-spacing:-0.35px;">Typ</div>
<div class="r" style="left:1707px;top:668px;width:133px;height:45px;overflow:hidden">
<div class="t" style="left:14px;top:-4.90px;font-size:24px;line-height:24px;color:#fff">Importier</div>
</div>
<div class="t" style="left:1855.00px;top:680.40px;font-size:24px;line-height:24px;color:#fff;font-weight:normal;letter-spacing:0.222px;">Reposition</div>
<div class="t" style="left:2023.00px;top:680.40px;font-size:24px;line-height:24px;color:#fff;font-weight:normal;letter-spacing:-1.2px;">Resize</div>
<div class="r" style="left:2153px;top:705px;width:15px;height:426px;background:#b9b9b9"></div>
<div class="r" style="left:1786px;top:1397px;width:223px;height:44px;background:#3d3d3d"></div>
<div class="r" style="left:2032px;top:1397px;width:223px;height:44px;background:#e5352e"></div>
<div class="t" style="left:1838.60px;top:1406.20px;font-size:24px;line-height:24px;color:#fff;font-weight:normal;letter-spacing:0.0px;"><u>A</u>bbrechen</div>
<div class="t" style="left:2095.00px;top:1406.20px;font-size:24px;line-height:24px;color:#fff;font-weight:normal;letter-spacing:0.371px;"><u>W</u>eiter &gt;</div>
<div class="r" style="left:253px;top:379px;width:168px;height:168px;border-radius:50%;background:rgba(27,130,230,0.96)"></div>
<svg class="r" style="left:0;top:0" width="400" height="600" viewBox="0 0 400 600"><path d="M339.6,429.1 L347.2,429.1 L347.2,502.4 L336.2,502.4 L336.2,443.6 L321.1,452.6 L316.9,444 Z" fill="#fff"/></svg>
<div class="r" style="left:1925px;top:379px;width:168px;height:168px;border-radius:50%;background:rgba(27,130,230,0.96)"></div>
<div class="t" style="left:1925px;top:411.2px;width:168px;text-align:center;font-size:108px;line-height:108px;color:#fff">2</div>
<div class="r" style="left:1925px;top:747px;width:168px;height:168px;border-radius:50%;background:rgba(27,130,230,0.96)"></div>
<div class="t" style="left:1925px;top:779.2px;width:168px;text-align:center;font-size:108px;line-height:108px;color:#fff">3</div>
</body></html>
